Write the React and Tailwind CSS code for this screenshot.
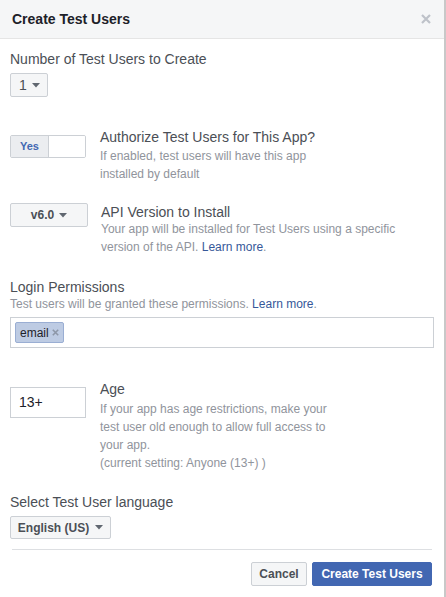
import React from "react";

function Caret({ className = "" }) {
  return (
    <svg width="8" height="5" viewBox="0 0 8 5" className={className}>
      <path d="M0 0 L8 0 L4 4.5 Z" fill="#606770" />
    </svg>
  );
}

export default function App() {
  return (
    <div className="w-[446px] h-[597px] bg-white border-r-2 border-[#c8c8c8] font-['Liberation_Sans',Arial,sans-serif] text-[#4b4f56] overflow-hidden">
      <div className="h-[39px] bg-[#f5f6f7] border-b border-[#e5e5e5] flex items-center justify-between pl-3 pr-[13px]">
        <div className="text-[14px] font-bold text-[#1d2129]">Create Test Users</div>
        <svg width="10" height="10" viewBox="0 0 10 10">
          <path d="M1 1 L9 9 M9 1 L1 9" stroke="#bec2c9" strokeWidth="2.2" />
        </svg>
      </div>

      <div className="px-[10px] pt-[11px]">
        <div className="text-[14px] leading-[18px]">Number of Test Users to Create</div>
        <div className="mt-[5px] inline-flex items-center gap-[5px] h-[24px] pl-[8px] pr-[7px] bg-[#f5f6f7] border border-[#ccd0d5] rounded-[2px] text-[14px] text-[#4b4f56]">
          <span>1</span>
          <Caret />
        </div>

        <div className="mt-[31px] flex">
          <div className="w-[90px] shrink-0">
            <div className="mt-[7px] w-[76px] h-[23px] flex border border-[#ccd0d5] rounded-[2px] overflow-hidden">
              <div className="w-[38px] bg-[#ebedf0] border-r border-[#ccd0d5] flex items-center justify-center text-[11px] font-bold text-[#4267b2]">Yes</div>
              <div className="flex-1 bg-white"></div>
            </div>
          </div>
          <div>
            <div className="text-[14px] leading-[18px]">Authorize Test Users for This App?</div>
            <div className="mt-[1px] text-[12px] leading-[18px] text-[#90949c]">
              If enabled, test users will have this app
              <br />
              installed by default
            </div>
          </div>
        </div>

        <div className="mt-[20px] flex">
          <div className="w-[91px] shrink-0">
            <div className="w-[78px] h-[24px] flex items-center justify-center gap-[5px] bg-[#f5f6f7] border border-[#ccd0d5] rounded-[2px] text-[12px] font-bold text-[#4b4f56]">
              <span>v6.0</span>
              <Caret />
            </div>
          </div>
          <div>
            <div className="text-[14px] leading-[18px]">API Version to Install</div>
            <div className="text-[12px] leading-[17.5px] text-[#90949c]">
              Your app will be installed for Test Users using a specific
              <br />
              version of the API. <span className="text-[#365899]">Learn more</span>.
            </div>
          </div>
        </div>

        <div className="mt-[22px] text-[14px] leading-[18px]">Login Permissions</div>
        <div className="text-[12px] leading-[16px] text-[#90949c]">
          Test users will be granted these permissions. <span className="text-[#365899]">Learn more</span>.
        </div>
        <div className="mt-[5px] h-[31px] border border-[#ccd0d5] bg-white flex items-center px-[4px]">
          <div className="h-[21px] w-[49px] flex items-center gap-[3px] pl-[4px] bg-[#bdcbe3] border border-[#9aaed3] rounded-[2px] text-[12px] text-[#1d2129]">
            <span>email</span>
            <svg width="7" height="7" viewBox="0 0 7 7">
              <path d="M0.8 0.8 L6.2 6.2 M6.2 0.8 L0.8 6.2" stroke="#8d97a8" strokeWidth="1.6" />
            </svg>
          </div>
        </div>

        <div className="mt-[32px] flex">
          <div className="w-[90px] shrink-0">
            <div className="mt-[7px] w-[76px] h-[31px] border border-[#ccd0d5] bg-white flex items-center pl-[8px] text-[14px] text-[#1d2129]">13+</div>
          </div>
          <div>
            <div className="text-[14px] leading-[18px]">Age</div>
            <div className="mt-[2px] text-[12px] leading-[18px] text-[#90949c]">
              If your app has age restrictions, make your
              <br />
              test user old enough to allow full access to
              <br />
              your app.
              <br />
              (current setting: Anyone (13+) )
            </div>
          </div>
        </div>

        <div className="mt-[21px] text-[14px] leading-[18px]">Select Test User language</div>
        <div className="mt-[5px] inline-flex items-center gap-[6px] h-[23px] w-[101px] justify-center bg-[#f5f6f7] border border-[#ccd0d5] rounded-[2px] text-[12px] font-bold text-[#4b4f56]">
          <span>English (US)</span>
          <Caret />
        </div>

        <div className="mt-[10px] mx-[2px] border-t border-[#dddfe2]"></div>

        <div className="mt-[12px] flex justify-end gap-[5px] pr-[2px]">
          <div className="h-[24px] w-[56px] flex items-center justify-center bg-[#f5f6f7] border border-[#ccd0d5] rounded-[2px] text-[12px] font-bold text-[#4b4f56]">Cancel</div>
          <div className="h-[24px] w-[120px] flex items-center justify-center bg-[#4267b2] border border-[#4267b2] rounded-[2px] text-[12px] font-bold text-white">Create Test Users</div>
        </div>
      </div>
    </div>
  );
}
